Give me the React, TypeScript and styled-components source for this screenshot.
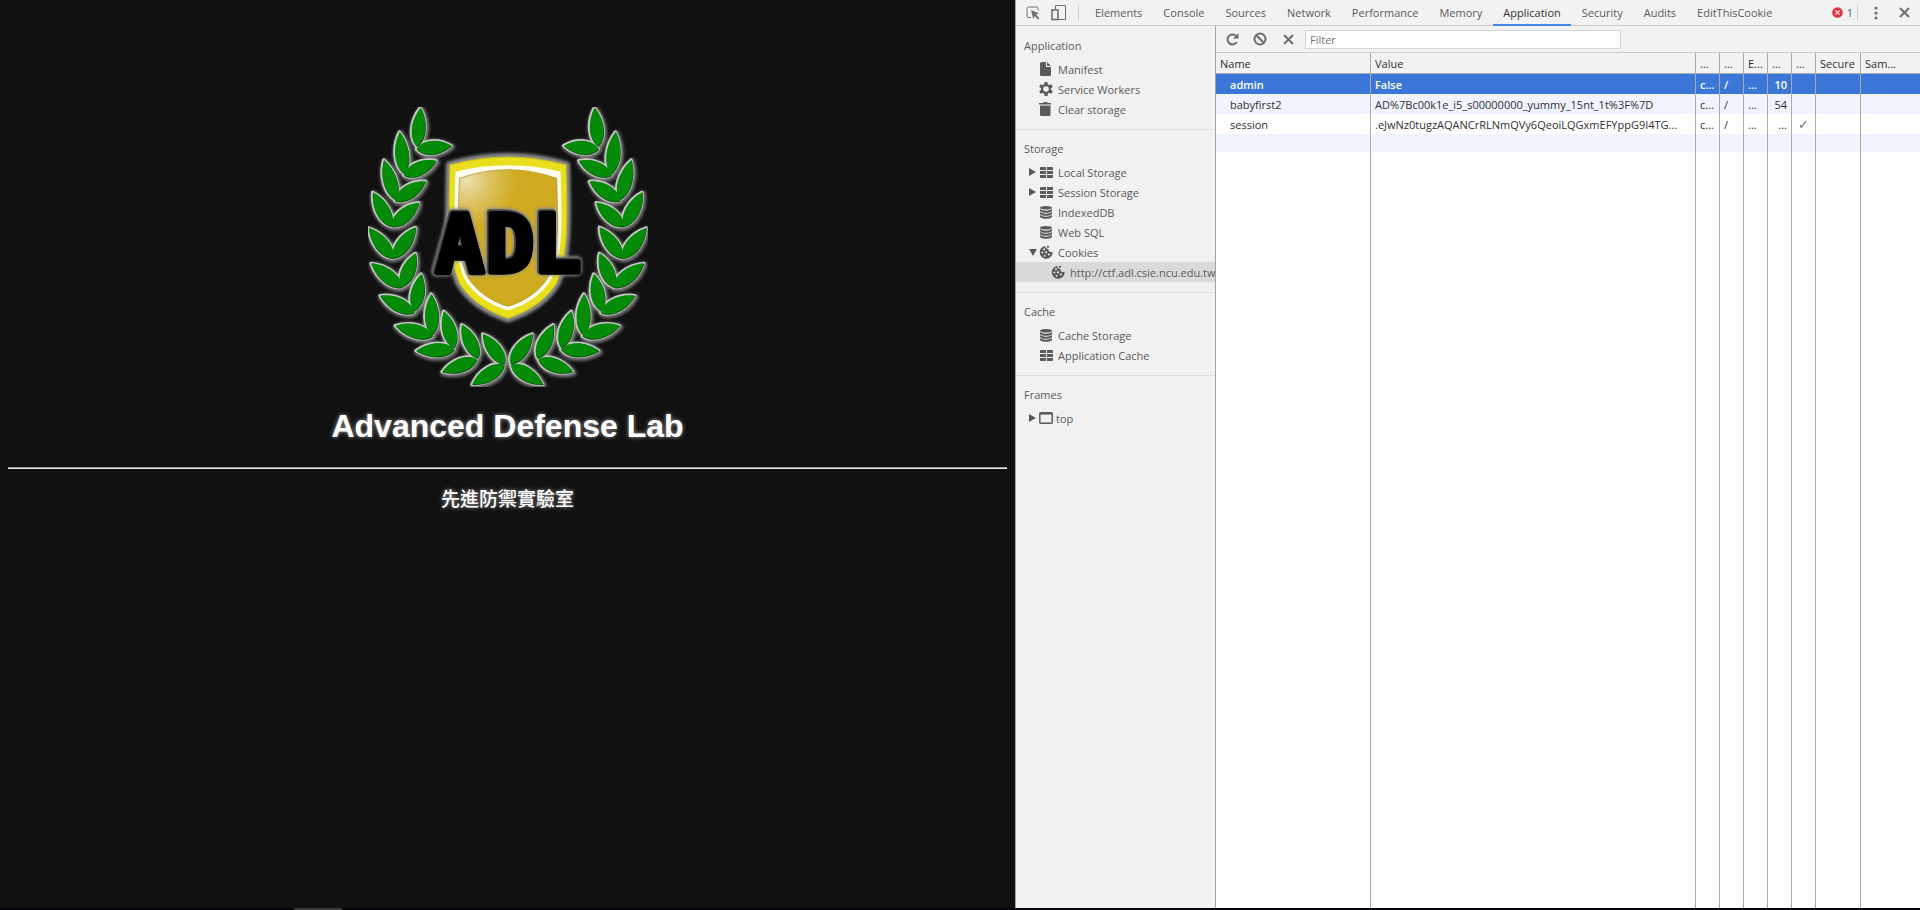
import React from "react";
import styled, { createGlobalStyle } from "styled-components";

const UI_FONT = '"Open Sans", "Noto Sans", "DejaVu Sans", sans-serif';

const GlobalStyle = createGlobalStyle`
  *, *::before, *::after { box-sizing: border-box; }
  html, body, #root { height: 100%; margin: 0; }
  body { background: #02040a; overflow: hidden; }
`;

/* ---------- window ---------- */

const Window = styled.div`
  display: flex;
  flex-direction: column;
  height: 100vh;
`;

const Split = styled.div`
  display: flex;
  flex: 1;
  min-height: 0;
`;

const Taskbar = styled.div`
  height: 2px;
  padding-left: 294px;
  background: #02040a;
`;

const TaskbarItem = styled.div`
  width: 48px;
  height: 2px;
  background: #3a3a3c;
`;

/* ---------- web page ---------- */

const Page = styled.main`
  flex: 1;
  min-width: 0;
  padding: 107px 8px 0;
  background: #111;
  color: #fff;
  text-align: center;
  font-family: "Liberation Sans", "Noto Sans CJK TC", sans-serif;
  text-shadow: 0 0 4px rgba(255, 255, 255, 0.6);
`;

const Crest = styled.svg`
  display: block;
  width: 280px;
  height: 280px;
  margin: 0 auto;
  text-shadow: none;
`;

const PageTitle = styled.h1`
  margin: 21px 0 22px;
  font-size: 32px;
  line-height: 37px;
  font-weight: 700;
`;

const Rule = styled.hr`
  height: 2px;
  margin: 0;
  border: 0;
  border-top: 1px solid #9a9a9a;
  border-bottom: 1px solid #eee;
`;

const Subtitle = styled.h3`
  margin: 18px 0 0;
  font-size: 19px;
  line-height: 26px;
  font-weight: 500;
`;

/* ---------- devtools ---------- */

const DevTools = styled.section`
  display: flex;
  flex-direction: column;
  flex: 0 0 905px;
  min-width: 0;
  border-left: 1px solid #a3a3a3;
  background: #f2f2f2;
  color: #5a5a5a;
  font-family: ${UI_FONT};
  font-size: 11px;
  line-height: 20px;
`;

const TabBar = styled.header`
  display: flex;
  align-items: center;
  height: 26px;
  padding-left: 10px;
  border-bottom: 1px solid #ccc;
`;

const IconButton = styled.button<{ $width?: number }>`
  display: flex;
  align-items: center;
  justify-content: center;
  width: ${(p) => p.$width ?? 28}px;
  height: 24px;
  padding: 0;
  border: 0;
  background: none;
  color: #6e6e6e;
`;

const InspectTools = styled.div`
  display: flex;
  gap: 10px;
`;

const Divider = styled.span<{ $gap: number }>`
  width: 1px;
  height: 16px;
  margin: 0 6px 0 ${(p) => p.$gap}px;
  background: #ccc;
`;

const Tabs = styled.nav`
  display: flex;
  flex: 1;
  gap: 1px;
  height: 26px;
`;

const Tab = styled.button<{ $active?: boolean }>`
  height: 26px;
  padding: 2px 10px 0;
  border: 0;
  border-bottom: 2px solid ${(p) => (p.$active ? "#4a88e8" : "transparent")};
  background: none;
  color: ${(p) => (p.$active ? "#333" : "#5a5a5a")};
  font: inherit;
  white-space: nowrap;
`;

const ErrorCount = styled.span`
  display: flex;
  align-items: center;
  gap: 4px;
`;

const Body = styled.div`
  display: flex;
  flex: 1;
  min-height: 0;
`;

const Sidebar = styled.aside`
  width: 200px;
  padding-top: 1px;
  overflow: hidden;
  border-right: 1px solid #a3a3a3;
  background: #f1f1f1;
`;

const Section = styled.section`
  padding-bottom: 10px;
  & + & { border-top: 1px solid #dedede; }
`;

const SectionTitle = styled.h2`
  margin: 0;
  padding: 9px 8px 3px;
  font-size: 11px;
  line-height: 20px;
  font-weight: 400;
`;

const TreeItem = styled.a<{ $depth?: number; $selected?: boolean; $tight?: boolean }>`
  display: grid;
  grid-template-columns: 10px ${(p) => (p.$tight ? 17 : 19)}px 1fr;
  align-items: center;
  height: 20px;
  padding-left: ${(p) => 13 + (p.$depth ?? 0) * 12}px;
  background: ${(p) => (p.$selected ? "#dadada" : "transparent")};
  color: inherit;
  text-decoration: none;
  white-space: nowrap;
`;

const TreeArrow = styled.span`
  display: flex;
`;

const TreeLabel = styled.span`
  padding-top: 2px;
  line-height: 18px;
`;

const Main = styled.div`
  display: flex;
  flex-direction: column;
  flex: 1;
  min-width: 0;
`;

const Toolbar = styled.div`
  display: flex;
  align-items: center;
  height: 27px;
  padding-left: 2px;
  border-bottom: 1px solid #ccc;
`;

const FilterInput = styled.input`
  width: 316px;
  height: 19px;
  margin-left: 3px;
  padding: 2px 4px 0;
  border: 1px solid #d4d4d4;
  background: #fff;
  color: #333;
  font: inherit;
  &::placeholder { color: #757575; opacity: 1; }
`;

const GridFrame = styled.div`
  flex: 1;
  min-height: 0;
`;

const Grid = styled.table`
  width: 100%;
  height: 100%;
  table-layout: fixed;
  border-collapse: separate;
  border-spacing: 0;
  background: #fff;
  color: #303030;
`;

const HeadCell = styled.th`
  height: 21px;
  padding: 2px 4px 0;
  overflow: hidden;
  border-right: 1px solid #aaa;
  border-bottom: 1px solid #aaa;
  background: #f2f2f2;
  font-weight: 400;
  line-height: 18px;
  text-align: left;
  white-space: nowrap;
  &:last-child { border-right: 0; }
`;

const Row = styled.tr<{ $selected?: boolean; $striped?: boolean; $short?: boolean }>`
  height: ${(p) => (p.$short ? 18 : 20)}px;
  background: ${(p) => (p.$selected ? "#3a77d9" : p.$striped ? "#f0f4fd" : "#fff")};
  color: ${(p) => (p.$selected ? "#fff" : "inherit")};
  font-weight: ${(p) => (p.$selected ? 600 : 400)};
`;

const FillerRow = styled.tr`
  height: auto;
`;

const Cell = styled.td<{ $indent?: boolean; $align?: "right" | "center" }>`
  padding: 2px 4px 0 ${(p) => (p.$indent ? 14 : 4)}px;
  overflow: hidden;
  border-right: 1px solid #aaa;
  line-height: 18px;
  text-align: ${(p) => p.$align ?? "left"};
  white-space: nowrap;
  &:last-child { border-right: 0; }
`;

const Check = styled.span`
  color: #6e6e6e;
  font-family: "DejaVu Sans", sans-serif;
  font-size: 13px;
`;

/* ---------- icons ---------- */

const InspectIcon = () => (
  <svg width="14" height="14" viewBox="0 0 14 14">
    <path d="M5 11.5H2.5a1.5 1.5 0 0 1-1.5-1.5V2.5A1.5 1.5 0 0 1 2.500 1H10.500A1.500 1.500 0 0 1 12 2.500V4.500" fill="none" stroke="currentColor" />
    <path d="M5 4l8 3.200-3 1.400 3.400 3.600-1.200 1.200-3.600-3.500-1.400 3z" fill="currentColor" />
  </svg>
);

const DeviceIcon = () => (
  <svg width="16" height="17" viewBox="0 0 16 17" fill="none" stroke="currentColor">
    <path d="M4.500 5V1.500h10v14H8" />
    <rect x="1" y="6" width="6" height="9.500" strokeWidth="1.600" />
  </svg>
);

const FileIcon = () => (
  <svg width="13" height="14" viewBox="0 0 13 14" fill="currentColor">
    <path d="M1 1.500Q1 0 2.500 0H7v5h5v7.500q0 1.500-1.500 1.500h-8Q1 14 1 12.500zM8 0l4 4H8z" />
  </svg>
);

const GearIcon = () => (
  <svg width="14" height="14" viewBox="0 0 14 14">
    <circle cx="7" cy="7" r="3.900" fill="none" stroke="currentColor" strokeWidth="2.200" />
    {[0, 60, 120, 180, 240, 300].map((a) => (
      <path key={a} d="M5 3L5.600 0h2.800l.6 3z" fill="currentColor" transform={`rotate(${a} 7 7)`} />
    ))}
  </svg>
);

const TrashIcon = () => (
  <svg width="13" height="14" viewBox="0 0 13 14" fill="currentColor">
    <path d="M0 1h4l1-1h3l1 1h3v1.400H0zM1 3.600h10.500V12.500q0 1.500-1.500 1.500H2.500Q1 14 1 12.500z" />
  </svg>
);

const TableIcon = () => (
  <svg width="14" height="11" viewBox="-1 0 14 11" fill="currentColor">
    <path d="M0 1q0-1 1-1h5v3H0zM7 0h5q1 0 1 1v2H7zM0 4h6v3H0zM7 4h6v3H7zM0 8h6v3H1q-1 0-1-1zM7 8h6v2q0 1-1 1H7z" />
  </svg>
);

const DatabaseIcon = () => (
  <svg width="13" height="13" viewBox="-1 0 13 13" fill="currentColor">
    <ellipse cx="6" cy="1.800" rx="6" ry="1.800" />
    {[0, 3, 6].map((y) => (
      <path key={y} transform={`translate(0 ${y})`} d="M0 3q2 1.700 6 1.700T12 3v1.800Q11 6.800 6 6.800T0 4.800z" />
    ))}
  </svg>
);

const CookieIcon = () => (
  <svg width="14" height="14" viewBox="0 0 14 14">
    <path d="M6.500 1a2.500 2.500 0 0 0 3 3 2.500 2.500 0 0 0 4 2.500A6.400 6.400 0 1 1 6.500 1z" fill="currentColor" />
    <circle cx="9" cy="1.800" r="1.100" fill="currentColor" />
    <g fill="#eee">
      <circle cx="5" cy="4.200" r="1" />
      <circle cx="3.400" cy="7.500" r="0.900" />
      <circle cx="7" cy="7.300" r="1.100" />
      <circle cx="5.600" cy="10.800" r="0.900" />
      <circle cx="9.800" cy="9.500" r="1" />
    </g>
  </svg>
);

const FrameIcon = () => (
  <svg width="14" height="12" viewBox="0 0 14 12" fill="none" stroke="currentColor">
    <rect x="0.800" y="0.800" width="12.400" height="10.400" rx="1" strokeWidth="1.500" />
    <path d="M1 1.500h12" strokeWidth="2.200" />
  </svg>
);

const Arrow = ({ open }: { open?: boolean }) => (
  <svg width="8" height="8" viewBox="0 0 8 8" fill="currentColor">
    <path d={open ? "M0 1h8L4 8z" : "M0 0l7 4-7 4z"} />
  </svg>
);

const ReloadIcon = () => (
  <svg width="13" height="13" viewBox="0 0 13 13">
    <path d="M10.800 9A5 5 0 1 1 10.200 3" fill="none" stroke="currentColor" strokeWidth="2" />
    <path d="M12.500 0v5.500H7z" fill="currentColor" />
  </svg>
);

const BlockIcon = () => (
  <svg width="14" height="14" viewBox="0 0 14 14" fill="none" stroke="currentColor" strokeWidth="2">
    <circle cx="7" cy="7" r="5.500" />
    <path d="M3.200 3.200l7.600 7.600" />
  </svg>
);

const CrossIcon = () => (
  <svg width="11" height="11" viewBox="0 0 11 11" fill="none" stroke="currentColor" strokeWidth="2">
    <path d="M1 1l9 9M10 1l-9 9" />
  </svg>
);

const DotsIcon = () => (
  <svg width="4" height="14" viewBox="0 0 4 14" fill="currentColor">
    <circle cx="2" cy="2" r="1.600" />
    <circle cx="2" cy="7" r="1.600" />
    <circle cx="2" cy="12" r="1.600" />
  </svg>
);

const ErrorIcon = () => (
  <svg width="11" height="11" viewBox="0 0 11 11">
    <circle cx="5.500" cy="5.500" r="5.300" fill="#dc3545" />
    <path d="M3.500 3.500l4 4M7.500 3.500l-4 4" stroke="#f6d5d8" strokeWidth="1.300" />
  </svg>
);

/* ---------- crest ---------- */

// Each leaf of the left branch: tip x, tip y, base x, base y.
const LEAVES: [number, number, number, number][] = [
  [213, 54, 202, 170], [305, 168, 201, 178],
  [150, 127, 163, 252], [260, 213, 163, 257],
  [103, 211, 138, 330], [228, 275, 136, 333],
  [70, 308, 125, 410], [208, 339, 126, 410],
  [58, 415, 130, 506], [198, 413, 131, 505],
  [65, 521, 157, 593], [198, 491, 156, 591],
  [92, 618, 194, 669], [215, 553, 194, 663],
  [138, 708, 249, 739], [245, 613, 248, 735],
  [200, 783, 314, 779], [283, 665, 313, 774],
  [278, 846, 382, 809], [337, 705, 385, 805],
  [368, 884, 464, 825], [400, 733, 465, 822],
];

const mirror = ([tx, ty, bx, by]: [number, number, number, number]): [number, number, number, number] => [948 - tx, ty, 948 - bx, by];

const leafPath = ([tx, ty, bx, by]: [number, number, number, number]) => {
  const dx = tx - bx;
  const dy = ty - by;
  const len = Math.hypot(dx, dy);
  const nx = (-dy / len) * 27;
  const ny = (dx / len) * 27;
  const at = (t: number, s: number) => `${(bx + dx * t + nx * s).toFixed(1)} ${(by + dy * t + ny * s).toFixed(1)}`;
  return `M${bx} ${by}C${at(0.2, 1)} ${at(0.65, 1)} ${tx} ${ty}C${at(0.65, -1)} ${at(0.2, -1)} ${bx} ${by}Z`;
};

const WREATH = [...LEAVES, ...LEAVES.map(mirror)].map(leafPath).join("");
const LETTER_X = "254 404 545";

const CrestLogo = () => (
  <Crest viewBox="54 50 840 840" role="img" aria-label="ADL crest">
    <defs>
      <filter id="soft" x="-5%" y="-5%" width="110%" height="110%">
        <feGaussianBlur stdDeviation="4" />
      </filter>
      <filter id="edge" x="-5%" y="-5%" width="110%" height="110%">
        <feGaussianBlur stdDeviation="1.500" />
      </filter>
      <radialGradient id="gold" gradientUnits="userSpaceOnUse" cx="350" cy="270" r="150">
        <stop offset="0" stopColor="#ecdfae" />
        <stop offset="0.500" stopColor="#dcc05c" />
        <stop offset="1" stopColor="#d0ab20" />
      </radialGradient>
    </defs>
    <path d={WREATH} transform="translate(1 2)" fill="#777" stroke="#777" strokeWidth="17" strokeLinejoin="round" filter="url(#soft)" />
    <path d={WREATH} transform="translate(-2 -2)" fill="#c4c8c4" stroke="#c4c8c4" strokeWidth="10" strokeLinejoin="round" filter="url(#edge)" />
    <path d={WREATH} fill="#0a3c0c" stroke="#0a3c0c" strokeWidth="1" />
    <path d={WREATH} transform="translate(-1 -2)" fill="#048c08" />
    <path d="M298 223Q474 173 650 223C655 400 655 500 622 578C592 632 530 668 474 686C418 668 356 632 326 578C293 500 293 400 298 223Z" fill="#888" stroke="#8a8a8a" strokeWidth="20" strokeLinejoin="round" filter="url(#soft)" />
    <path d="M300 224Q474 176 648 224C653 400 653 500 620 577C590 630 530 666 474 684C418 666 358 630 328 577C295 500 295 400 300 224Z" fill="#eadf1c" stroke="#c9bd20" strokeWidth="3" />
    <path d="M316 244Q474 206 632 244C636 400 640 480 606 562C580 612 524 646 474 660C424 646 368 612 342 562C308 480 312 400 316 244Z" fill="#fffef0" />
    <path d="M328 264Q474 212 620 264C624 400 628 480 597 556C572 602 522 634 474 648C426 634 376 602 351 556C320 480 324 400 328 264Z" fill="url(#gold)" stroke="#a58a1c" strokeWidth="2" />
    <g fontFamily='"DejaVu Sans Mono", monospace' fontWeight="700" fontSize="242" strokeLinejoin="round">
      <text x={LETTER_X} y="541" fill="#8c8c8c" stroke="#8c8c8c" strokeWidth="28" filter="url(#soft)">ADL</text>
      <text x={LETTER_X} y="541" fill="#4a4a4a" stroke="#4a4a4a" strokeWidth="20" filter="url(#edge)">ADL</text>
      <text x={LETTER_X} y="541" transform="translate(3 4)" fill="#000" stroke="#000" strokeWidth="16">ADL</text>
    </g>
  </Crest>
);

/* ---------- data ---------- */

const TABS = ["Elements", "Console", "Sources", "Network", "Performance", "Memory", "Application", "Security", "Audits", "EditThisCookie"];

type Item = { label: string; icon: React.ReactNode; arrow?: "open" | "closed"; depth?: number; selected?: boolean; tight?: boolean };

const SECTIONS: { title: string; items: Item[] }[] = [
  {
    title: "Application",
    items: [
      { label: "Manifest", icon: <FileIcon /> },
      { label: "Service Workers", icon: <GearIcon /> },
      { label: "Clear storage", icon: <TrashIcon /> },
    ],
  },
  {
    title: "Storage",
    items: [
      { label: "Local Storage", icon: <TableIcon />, arrow: "closed" },
      { label: "Session Storage", icon: <TableIcon />, arrow: "closed" },
      { label: "IndexedDB", icon: <DatabaseIcon /> },
      { label: "Web SQL", icon: <DatabaseIcon /> },
      { label: "Cookies", icon: <CookieIcon />, arrow: "open" },
      { label: "http://ctf.adl.csie.ncu.edu.tw", icon: <CookieIcon />, depth: 1, selected: true },
    ],
  },
  {
    title: "Cache",
    items: [
      { label: "Cache Storage", icon: <DatabaseIcon /> },
      { label: "Application Cache", icon: <TableIcon /> },
    ],
  },
  { title: "Frames", items: [{ label: "top", icon: <FrameIcon />, arrow: "closed", tight: true }] },
];

const COLUMNS: { label: string; width?: number }[] = [
  { label: "Name", width: 155 },
  { label: "Value" },
  { label: "...", width: 24 },
  { label: "...", width: 24 },
  { label: "E...", width: 24 },
  { label: "...", width: 24 },
  { label: "...", width: 24 },
  { label: "Secure", width: 45 },
  { label: "Sam...", width: 59 },
];

const COOKIES = [
  ["admin", "False", "c...", "/", "...", "10", "", "", ""],
  ["babyfirst2", "AD%7Bc00k1e_i5_s00000000_yummy_15nt_1t%3F%7D", "c...", "/", "...", "54", "", "", ""],
  ["session", ".eJwNz0tugzAQANCrRLNmQVy6QeoiLQGxmEFYppG9I4TG...", "c...", "/", "...", "...", "✓", "", ""],
  ["", "", "", "", "", "", "", "", ""],
];

const alignOf = (column: number) => (column === 5 ? "right" : column === 6 ? "center" : undefined);

export default function App() {
  return (
    <Window>
      <GlobalStyle />
      <Split>
        <Page>
          <CrestLogo />
          <PageTitle>Advanced Defense Lab</PageTitle>
          <Rule />
          <Subtitle lang="zh-Hant">先進防禦實驗室</Subtitle>
        </Page>
        <DevTools>
          <TabBar>
            <InspectTools>
              <IconButton $width={14} aria-label="Inspect element"><InspectIcon /></IconButton>
              <IconButton $width={18} aria-label="Toggle device toolbar"><DeviceIcon /></IconButton>
            </InspectTools>
            <Divider $gap={10} />
            <Tabs>
              {TABS.map((tab) => (
                <Tab key={tab} $active={tab === "Application"}>{tab}</Tab>
              ))}
            </Tabs>
            <ErrorCount><ErrorIcon />1</ErrorCount>
            <Divider $gap={4} />
            <IconButton $width={24} aria-label="Customize"><DotsIcon /></IconButton>
            <IconButton $width={32} aria-label="Close"><CrossIcon /></IconButton>
          </TabBar>
          <Body>
            <Sidebar>
              {SECTIONS.map((section) => (
                <Section key={section.title}>
                  <SectionTitle>{section.title}</SectionTitle>
                  {section.items.map((item) => (
                    <TreeItem key={item.label} href="#" $depth={item.depth} $selected={item.selected} $tight={item.tight}>
                      <TreeArrow>{item.arrow && <Arrow open={item.arrow === "open"} />}</TreeArrow>
                      {item.icon}
                      <TreeLabel>{item.label}</TreeLabel>
                    </TreeItem>
                  ))}
                </Section>
              ))}
            </Sidebar>
            <Main>
              <Toolbar>
                <IconButton aria-label="Refresh"><ReloadIcon /></IconButton>
                <IconButton aria-label="Clear all"><BlockIcon /></IconButton>
                <IconButton aria-label="Delete selected"><CrossIcon /></IconButton>
                <FilterInput aria-label="Filter" placeholder="Filter" />
              </Toolbar>
              <GridFrame>
                <Grid>
                  <colgroup>
                    {COLUMNS.map((column, i) => <col key={i} width={column.width} />)}
                  </colgroup>
                  <thead>
                    <tr>{COLUMNS.map((column, i) => <HeadCell key={i}>{column.label}</HeadCell>)}</tr>
                  </thead>
                  <tbody>
                    {COOKIES.map((cookie, r) => (
                      <Row key={r} $selected={r === 0} $striped={r % 2 === 1} $short={r === 3}>
                        {cookie.map((value, c) => (
                          <Cell key={c} $indent={c === 0} $align={alignOf(c)}>
                            {value === "✓" ? <Check>{value}</Check> : value}
                          </Cell>
                        ))}
                      </Row>
                    ))}
                    <FillerRow>{COLUMNS.map((_, i) => <Cell key={i} />)}</FillerRow>
                  </tbody>
                </Grid>
              </GridFrame>
            </Main>
          </Body>
        </DevTools>
      </Split>
      <Taskbar><TaskbarItem /></Taskbar>
    </Window>
  );
}
